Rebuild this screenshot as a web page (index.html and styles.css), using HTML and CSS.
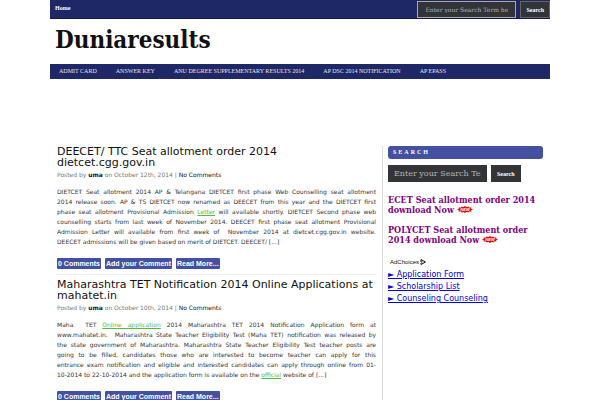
FILE: index.html
```html
<!DOCTYPE html>
<html lang="en">
<head>
    <meta charset="UTF-8">
    <meta name="viewport" content="width=device-width, initial-scale=1.0">
    <title>Duniaresults</title>
    <link rel="stylesheet" href="styles.css">
</head>
<body>
    <div class="wrapper">
        <div class="topbar">
            <a class="home" href="#">Home</a>
            <form class="top-search">
                <input type="text" placeholder="Enter your Search Term here" aria-label="Search this site">
                <button type="submit">Search</button>
            </form>
        </div>
        <header>
            <h1><a href="#">Duniaresults</a></h1>
        </header>
        <nav class="menu">
            <a href="#">ADMIT CARD</a>
            <a href="#">ANSWER KEY</a>
            <a href="#">ANU DEGREE SUPPLEMENTARY RESULTS 2014</a>
            <a href="#">AP DSC 2014 NOTIFICATION</a>
            <a href="#">AP EPASS</a>
        </nav>
        <div class="columns">
            <main>
                <article class="post">
                    <h2><a href="#">DEECET/ TTC Seat allotment order 2014 dietcet.cgg.gov.in</a></h2>
                    <p class="meta">Posted by <a class="author" href="#">uma</a> on October 12th, 2014 | <a href="#">No Comments</a></p>
                    <p class="entry">
                        DIETCET Seat allotment 2014 AP &amp; Telangana DIETCET first phase Web Counselling seat allotment<br>
                        2014 release soon. AP &amp; TS DIETCET now renamed as DEECET from this year and the DIETCET first<br>
                        phase seat allotment Provisional Admission <a href="#">Letter</a> will available shortly. DIETCET Second phase web<br>
                        counselling starts from last week of November 2014. DEECET first phase seat allotment Provisional<br>
                        Admission Letter will available from first week of&nbsp; November 2014 at dietcet.cgg.gov.in website.
                        <span class="last">DEECET admissions will be given based on merit of DIETCET. DEECET/ [...]</span>
                    </p>
                    <div class="links">
                        <a href="#">0 Comments</a>
                        <a href="#">Add your Comment</a>
                        <a href="#">Read More...</a>
                    </div>
                </article>
                <article class="post">
                    <h2><a href="#">Maharashtra TET Notification 2014 Online Applications at mahatet.in</a></h2>
                    <p class="meta">Posted by <a class="author" href="#">uma</a> on October 10th, 2014 | <a href="#">No Comments</a></p>
                    <p class="entry">
                        Maha&nbsp; TET <a href="#">Online application</a> 2014 Maharashtra TET 2014 Notification Application form at<br>
                        www.mahatet.in.&nbsp; Maharashtra State Teacher Eligibility Test (Maha TET) notification was released by<br>
                        the state government of Maharashtra. Maharashtra State Teacher Eligibility Test teacher posts are<br>
                        going to be filled, candidates those who are interested to become teacher can apply for this<br>
                        entrance exam notification and eligible and interested candidates can apply through online from 01-<br>
                        <span class="last">10-2014 to 22-10-2014 and the application form is available on the <a href="#">official</a> website of [...]</span>
                    </p>
                    <div class="links">
                        <a href="#">0 Comments</a>
                        <a href="#">Add your Comment</a>
                        <a href="#">Read More...</a>
                    </div>
                </article>
            </main>
            <aside>
                <h3 class="widget-title">SEARCH</h3>
                <form class="side-search">
                    <input type="text" placeholder="Enter your Search Term here" aria-label="Search">
                    <button type="submit">Search</button>
                </form>
                <p class="news">
                    <a href="#">ECET Seat allotment order 2014 download Now</a>
                    <svg class="new" viewBox="0 0 32 14" aria-label="New">
                        <path fill="#e01010" d="M0 7l4-2-1-2 5 0 1-2 4 1 3-2 3 2 4-1 1 2 5 0-1 2 4 2-4 2 1 2-5 0-1 2-4-1-3 2-3-2-4 1-1-2-5 0 1-2z"/>
                        <text x="16" y="10" text-anchor="middle">NEW</text>
                    </svg>
                </p>
                <p class="news">
                    <a href="#">POLYCET Seat allotment order 2014 download Now</a>
                    <svg class="new" viewBox="0 0 32 14" aria-label="New">
                        <path fill="#e01010" d="M0 7l4-2-1-2 5 0 1-2 4 1 3-2 3 2 4-1 1 2 5 0-1 2 4 2-4 2 1 2-5 0-1 2-4-1-3 2-3-2-4 1-1-2-5 0 1-2z"/>
                        <text x="16" y="10" text-anchor="middle">NEW</text>
                    </svg>
                </p>
                <div class="ads">
                    <div class="adchoices">
                        AdChoices
                        <svg viewBox="0 0 12 12"><path fill="none" stroke="#111" stroke-width="2" d="M5 6H2V1l9 5-9 5V8"/></svg>
                    </div>
                    <ul>
                        <li><a href="#">► Application Form</a></li>
                        <li><a href="#">► Scholarship List</a></li>
                        <li><a href="#">► Counseling Counseling</a></li>
                    </ul>
                </div>
            </aside>
        </div>
    </div>
</body>
</html>
```
FILE: styles.css
```css
* {
    box-sizing: border-box;
}
body {
    margin: 0;
    background: #fff;
    color: #333;
    font-family: "DejaVu Sans", sans-serif;
    font-size: 6px;
}
a {
    color: inherit;
    text-decoration: none;
}
h1, h2, h3, p, ul {
    margin: 0;
    padding: 0;
}
.wrapper {
    max-width: 500px;
    margin: 0 auto;
}
.topbar {
    display: flex;
    justify-content: space-between;
    background: #1e2866;
    border-bottom: 1px solid #10184c;
    height: 19px;
}
.home {
    padding: 4px 5px;
    color: #fff;
    font: bold 6px/8px "Liberation Serif", serif;
}
.top-search, .side-search {
    display: flex;
    gap: 4px;
}
.top-search {
    padding-top: 1px;
}
input, button {
    margin: 0;
    background: #333438;
    border: 1px solid #333438;
    border-radius: 0;
}
input {
    width: 99px;
    padding: 0 5px;
    color: #bbb;
    font: 8px "DejaVu Serif", serif;
}
.top-search input {
    padding: 0 7px;
    border-color: #aaa;
    font-size: 6px;
}
input::placeholder {
    color: #b5b5b5;
}
button {
    padding: 0 5px;
    color: #fff;
    font: bold 6px "Liberation Serif", serif;
    cursor: pointer;
}
.top-search button {
    border-color: #666;
}
header {
    padding: 6px 5px 9px;
}
h1 {
    color: #111;
    font: bold 24px/30px "DejaVu Serif Condensed", "DejaVu Serif", serif;
}
.menu {
    display: flex;
    gap: 19px;
    padding: 0 9px;
    background: #1e2866;
    color: #e4e4ee;
    font: 6px/15px "Liberation Serif", serif;
}
.columns {
    display: flex;
    margin-top: 67px;
}
main {
    flex: 1;
    padding: 0 6px 0 7px;
    border-right: 1px solid #ddd;
}
.post {
    padding-bottom: 5px;
    margin-bottom: 4px;
    border-bottom: 1px solid #eee;
}
h2 {
    color: #111;
    font-size: 11px;
    font-weight: normal;
    line-height: 11px;
}
.meta {
    margin: 3px 0 8px;
    color: #777;
    line-height: 8px;
}
.meta a {
    color: #111;
}
.meta .author {
    font-weight: bold;
}
.entry {
    line-height: 10px;
    text-align: justify;
    text-align-last: justify;
}
.entry .last {
    display: block;
    text-align-last: left;
}
.entry a {
    color: #58b840;
    text-decoration: underline;
}
.links {
    display: flex;
    gap: 4px;
    margin-top: 11px;
}
.links a {
    padding: 0 1px;
    border-radius: 1px;
    background: #4450a0;
    color: #fff;
    font: bold 7px/11px "Liberation Sans", sans-serif;
}
aside {
    width: 167px;
    padding: 0 7px 0 5px;
}
.widget-title {
    padding: 0 5px;
    border-radius: 3px;
    background: #4450a0;
    color: #fff;
    font: bold 6px/13px "Liberation Serif", serif;
    letter-spacing: 2px;
}
.side-search {
    height: 17px;
    margin: 6px 0 13px;
}
.news {
    margin-bottom: 10px;
    color: #800080;
    font: bold 9px/10px "DejaVu Serif Condensed", "DejaVu Serif", serif;
}
.new {
    width: 16px;
    height: 7px;
}
.new text {
    fill: #fff;
    font: italic bold 8px "Liberation Sans", sans-serif;
}
.adchoices {
    display: flex;
    align-items: center;
    gap: 1px;
    padding: 0 2px;
    margin: 13px 0 3px;
    color: #111;
    font: 6px/8px "Liberation Sans", sans-serif;
}
.adchoices svg {
    width: 6px;
    height: 6px;
}
.ads ul {
    list-style: none;
    color: #0000e0;
    font: 8px/12px "DejaVu Sans", sans-serif;
}
.ads li a {
    text-decoration: underline;
}
```
